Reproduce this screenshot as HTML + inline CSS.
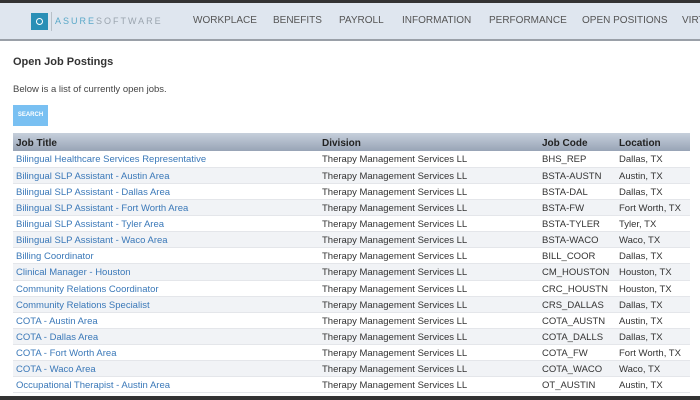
<!DOCTYPE html>
<html><head><style>
*{margin:0;padding:0;box-sizing:border-box}
body{width:700px;height:400px;overflow:hidden;background:#fff;font-family:"Liberation Sans",Arial,sans-serif;position:relative}
.top{position:absolute;left:0;top:0;width:700px;height:3px;background:#333}
.nav{position:absolute;left:0;top:3px;width:700px;height:38px;background:#dfe6ef;border-bottom:2px solid #9aa0a8}
.logo{position:absolute;left:31px;top:10px;width:17px;height:17px;background:#2a8fb6}
.logo:after{content:"";position:absolute;left:5px;top:5px;width:5px;height:5px;border:1.5px solid #fff;border-radius:50%}
.sep{position:absolute;left:51px;top:9px;width:1px;height:19px;background:#b8c0c8}
.brand{position:absolute;left:55px;top:13px;font-size:9px;letter-spacing:2px;color:#9aa4ae}
.brand b{color:#5aa8c8;font-weight:normal}
.nav span.m{position:absolute;top:12px;font-size:10px;color:#555;}
h1{position:absolute;left:13px;top:56px;font-size:11px;font-weight:bold;color:#333}
p{position:absolute;left:13px;top:84px;font-size:9.5px;color:#444}
.btn{position:absolute;left:13px;top:105px;width:35px;height:21px;background:#79c0f2;color:#fff;font-size:6px;font-weight:bold;line-height:21px;text-align:center}
table{position:absolute;left:13px;top:133px;width:677px;border-collapse:collapse;font-size:9.5px}
th{height:18px;text-align:left;font-weight:bold;color:#222;background:linear-gradient(#c6cfdb,#98a4b6);padding-left:3px;font-size:10px;padding-top:2px}
td{height:16.13px;padding-left:3px;padding-top:2px;color:#333;border-bottom:1px solid #e4e6ea;white-space:nowrap}
tr:nth-child(odd) td{background:#f1f3f6}
td:first-child{color:#3a78b8}
.bot{position:absolute;left:0;top:396px;width:700px;height:4px;background:#333}
</style></head><body>
<div class="top"></div>
<div class="nav">
<div class="logo"></div><div class="sep"></div>
<div class="brand"><b>ASURE</b>SOFTWARE</div>
<span class="m" style="left:193px">WORKPLACE</span>
<span class="m" style="left:273px">BENEFITS</span>
<span class="m" style="left:339px">PAYROLL</span>
<span class="m" style="left:402px">INFORMATION</span>
<span class="m" style="left:489px">PERFORMANCE</span>
<span class="m" style="left:582px">OPEN POSITIONS</span>
<span class="m" style="left:682px">VIRT</span>
</div>
<h1>Open Job Postings</h1>
<p>Below is a list of currently open jobs.</p>
<div class="btn">SEARCH</div>
<table>
<colgroup><col style="width:306px"><col style="width:220px"><col style="width:77px"><col></colgroup>
<tr><th>Job Title</th><th>Division</th><th>Job Code</th><th>Location</th></tr>
<tr><td>Bilingual Healthcare Services Representative</td><td>Therapy Management Services LL</td><td>BHS_REP</td><td>Dallas, TX</td></tr>
<tr><td>Bilingual SLP Assistant - Austin Area</td><td>Therapy Management Services LL</td><td>BSTA-AUSTN</td><td>Austin, TX</td></tr>
<tr><td>Bilingual SLP Assistant - Dallas Area</td><td>Therapy Management Services LL</td><td>BSTA-DAL</td><td>Dallas, TX</td></tr>
<tr><td>Bilingual SLP Assistant - Fort Worth Area</td><td>Therapy Management Services LL</td><td>BSTA-FW</td><td>Fort Worth, TX</td></tr>
<tr><td>Bilingual SLP Assistant - Tyler Area</td><td>Therapy Management Services LL</td><td>BSTA-TYLER</td><td>Tyler, TX</td></tr>
<tr><td>Bilingual SLP Assistant - Waco Area</td><td>Therapy Management Services LL</td><td>BSTA-WACO</td><td>Waco, TX</td></tr>
<tr><td>Billing Coordinator</td><td>Therapy Management Services LL</td><td>BILL_COOR</td><td>Dallas, TX</td></tr>
<tr><td>Clinical Manager - Houston</td><td>Therapy Management Services LL</td><td>CM_HOUSTON</td><td>Houston, TX</td></tr>
<tr><td>Community Relations Coordinator</td><td>Therapy Management Services LL</td><td>CRC_HOUSTN</td><td>Houston, TX</td></tr>
<tr><td>Community Relations Specialist</td><td>Therapy Management Services LL</td><td>CRS_DALLAS</td><td>Dallas, TX</td></tr>
<tr><td>COTA - Austin Area</td><td>Therapy Management Services LL</td><td>COTA_AUSTN</td><td>Austin, TX</td></tr>
<tr><td>COTA - Dallas Area</td><td>Therapy Management Services LL</td><td>COTA_DALLS</td><td>Dallas, TX</td></tr>
<tr><td>COTA - Fort Worth Area</td><td>Therapy Management Services LL</td><td>COTA_FW</td><td>Fort Worth, TX</td></tr>
<tr><td>COTA - Waco Area</td><td>Therapy Management Services LL</td><td>COTA_WACO</td><td>Waco, TX</td></tr>
<tr><td>Occupational Therapist - Austin Area</td><td>Therapy Management Services LL</td><td>OT_AUSTIN</td><td>Austin, TX</td></tr>
</table>
<div class="bot"></div>
</body></html>
